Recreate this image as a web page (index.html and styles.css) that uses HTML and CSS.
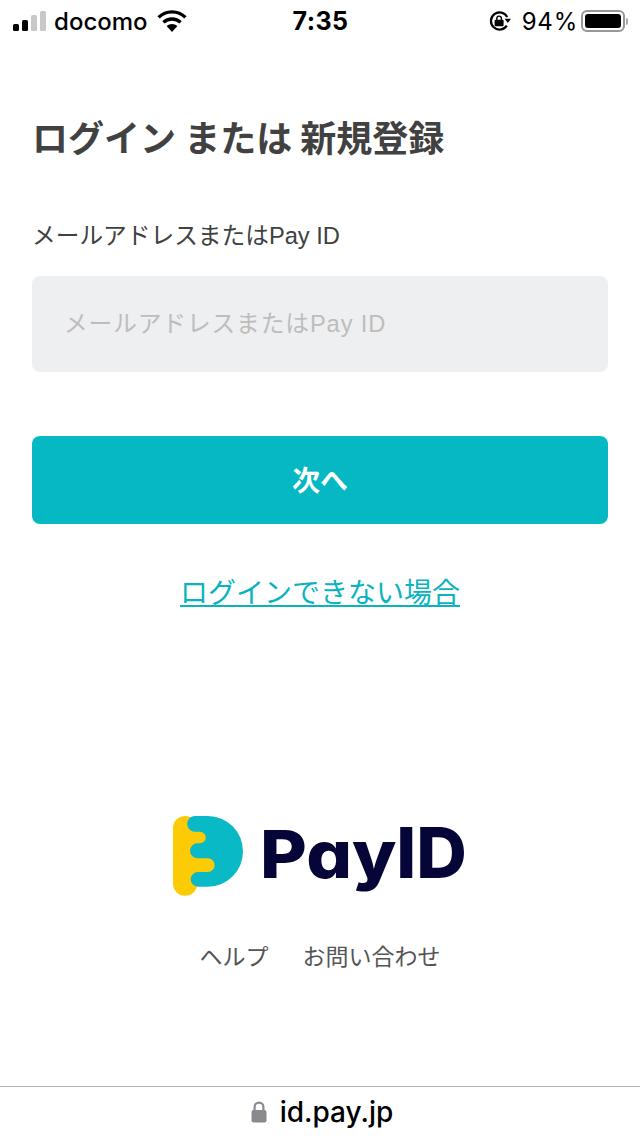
FILE: index.html
```html
<!DOCTYPE html>
<html lang="ja">
<head>
    <meta charset="UTF-8">
    <meta name="viewport" content="width=device-width, initial-scale=1.0">
    <title>PayID - ログイン</title>
    <link rel="stylesheet" href="styles.css">
</head>
<body>
    <!-- Status Bar -->
    <div class="status-bar">
        <div class="status-left">
            <div class="signal">
                <span class="bar bar-1"></span>
                <span class="bar bar-2"></span>
                <span class="bar bar-3 off"></span>
                <span class="bar bar-4 off"></span>
            </div>
            <span class="carrier">docomo</span>
            <svg class="wifi" width="30" height="22" viewBox="0 0 30 22">
                <path d="M15 22 L9.6 16 A8 8 0 0 1 20.4 16 Z" fill="#000"/>
                <path d="M6.4 12.4 A12.4 12.4 0 0 1 23.6 12.4" fill="none" stroke="#000" stroke-width="3.4"/>
                <path d="M1.6 7.4 A19 19 0 0 1 28.4 7.4" fill="none" stroke="#000" stroke-width="3.4"/>
            </svg>
        </div>
        <div class="status-time">7:35</div>
        <div class="status-right">
            <svg class="rotate-lock" width="22" height="22" viewBox="0 0 22 22">
                <path d="M17.8 15.6 A8.6 8.6 0 1 1 18.2 7" fill="none" stroke="#000" stroke-width="2.2"/>
                <path d="M15.6 8.8 L22 8.8 L18.8 13 Z" fill="#000"/>
                <rect x="5.6" y="9.8" width="9" height="6.4" rx="1" fill="#000"/>
                <path d="M7.8 10 V8.4 A2.3 2.3 0 0 1 12.4 8.4 V10" fill="none" stroke="#000" stroke-width="1.4"/>
            </svg>
            <span class="battery-text">94%</span>
            <div class="battery">
                <div class="battery-level"></div>
            </div>
            <span class="battery-cap"></span>
        </div>
    </div>

    <!-- Login Form -->
    <main class="content">
        <h1 class="title">ログイン または 新規登録</h1>
        <label class="field-label" for="email">メールアドレスまたはPay ID</label>
        <input id="email" class="field-input" type="text" placeholder="メールアドレスまたはPay ID">
        <button class="next-button">次へ</button>
        <a class="trouble-link" href="#">ログインできない場合</a>

        <div class="brand">
            <svg class="brand-mark" width="70" height="80" viewBox="0 0 70 80">
                <rect x="0" y="0" width="24.3" height="79.7" rx="12" fill="#fccb05"/>
                <rect x="6" y="8" width="40" height="54" fill="#fccb05"/>
                <path d="M22 0 H35 A35 35.35 0 0 1 35 70.7 H25 A7.35 7.35 0 0 1 25 56 H34.8 A6.85 6.85 0 0 0 34.8 42.3 H24.5 A7.5 7.5 0 0 1 24.5 27.3 H27 A5.8 5.8 0 0 0 27 15.7 H22 A7.85 7.85 0 0 1 22 0 Z" fill="#09b9c6"/>
            </svg>
            <div class="brand-name"><span class="brand-pay">Pay</span><span class="brand-id">ID</span></div>
        </div>

        <nav class="footer-links">
            <a href="#">ヘルプ</a>
            <a href="#">お問い合わせ</a>
        </nav>
    </main>

    <!-- Safari Address Bar -->
    <div class="address-bar">
        <svg class="lock" width="16" height="22" viewBox="0 0 16 22">
            <rect x="0.5" y="9" width="15" height="12.5" rx="2" fill="#8a8a8e"/>
            <path d="M3.6 10 V6 A4.4 4.4 0 0 1 12.4 6 V10" fill="none" stroke="#8a8a8e" stroke-width="2.2"/>
        </svg>
        <span class="address-text">id.pay.jp</span>
    </div>
</body>
</html>
```

FILE: styles.css
```css
* {
    margin: 0;
    padding: 0;
    box-sizing: border-box;
}

body {
    font-family: "Noto Sans CJK JP", "Noto Sans", sans-serif;
    background-color: #ffffff;
    color: #414141;
    width: 640px;
    height: 1136px;
    overflow: hidden;
    display: flex;
    flex-direction: column;
}

/* Status Bar */
.status-bar {
    height: 42px;
    padding: 0 12px 0 13px;
    display: grid;
    grid-template-columns: 1fr auto 1fr;
    align-items: center;
    color: #000000;
    font-family: Inter, sans-serif;
}

.status-left {
    display: flex;
    align-items: center;
}

.signal {
    display: flex;
    align-items: flex-end;
    gap: 2.5px;
    height: 20px;
}

.bar {
    width: 6.4px;
    background-color: #000000;
    border-radius: 1.5px;
}

.bar.off {
    background-color: #c8c8c8;
}

.bar-1 { height: 7px; }
.bar-2 { height: 11px; }
.bar-3 { height: 16px; }
.bar-4 { height: 20px; }

.carrier {
    font-size: 24px;
    font-weight: 500;
    margin-left: 8px;
}

.wifi {
    margin-left: 9px;
}

.status-time {
    font-size: 25px;
    font-weight: 700;
    letter-spacing: 0.4px;
}

.status-right {
    display: flex;
    align-items: center;
    justify-content: flex-end;
}

.battery-text {
    font-size: 24px;
    font-weight: 400;
    margin-left: 11px;
    letter-spacing: 0.8px;
}

.battery {
    width: 44px;
    height: 22px;
    margin-left: 3px;
    padding: 2px;
    border: 2px solid #979797;
    border-radius: 6px;
}

.battery-level {
    height: 100%;
    background-color: #000000;
    border-radius: 3px;
}

.battery-cap {
    width: 2px;
    height: 7px;
    margin-left: 1px;
    background-color: #a8a8a8;
    border-radius: 0 2px 2px 0;
}

/* Login Form */
.content {
    flex: 1;
    padding: 0 32px;
    display: flex;
    flex-direction: column;
}

.title {
    margin-top: 70px;
    font-size: 36px;
    line-height: 48px;
    font-weight: 700;
}

.field-label {
    margin-top: 58px;
    font-family: "Liberation Sans", "Noto Sans CJK JP", sans-serif;
    font-size: 23.7px;
    line-height: 36px;
}

.field-input {
    margin-top: 22px;
    height: 96px;
    padding: 0 32px;
    border: none;
    border-radius: 8px;
    background-color: #eeeff1;
    font-family: "Liberation Sans", "Noto Sans CJK JP", sans-serif;
    font-size: 23.7px;
    letter-spacing: 0.9px;
    outline: none;
}

.field-input::placeholder {
    color: #bdbdbd;
    opacity: 1;
}

.next-button {
    margin-top: 64px;
    height: 88px;
    padding-bottom: 3px;
    border: none;
    border-radius: 8px;
    background-color: #05b8c3;
    color: #ffffff;
    font-family: inherit;
    font-size: 28px;
    font-weight: 700;
}

.trouble-link {
    margin-top: 46px;
    align-self: center;
    font-size: 28px;
    line-height: 42px;
    color: #09b3bf;
}

/* Logo */
.brand {
    margin-top: 204px;
    display: flex;
    justify-content: center;
    align-items: flex-start;
    gap: 17px;
}

.brand-name {
    display: flex;
    align-items: baseline;
    height: 80px;
    font-family: Inter, sans-serif;
    font-weight: 800;
    color: #050537;
    line-height: 74px;
    font-feature-settings: "cv11";
}

.brand-pay {
    display: inline-block;
    width: 132px;
    font-size: 66px;
    transform: scaleX(1.09);
    transform-origin: left;
}

.brand-id {
    font-size: 70px;
    margin-left: 4px;
}

.footer-links {
    margin-top: 43px;
    display: flex;
    justify-content: center;
    gap: 34px;
    font-size: 23px;
    line-height: 33px;
}

.footer-links a {
    color: #555555;
    text-decoration: none;
}

/* Address Bar */
.address-bar {
    height: 50px;
    padding-left: 4px;
    border-top: 1px solid #b4b4b4;
    display: flex;
    justify-content: center;
    align-items: center;
    gap: 13px;
}

.address-text {
    font-family: Inter, sans-serif;
    font-size: 28px;
    font-weight: 500;
    color: #000000;
}
```
